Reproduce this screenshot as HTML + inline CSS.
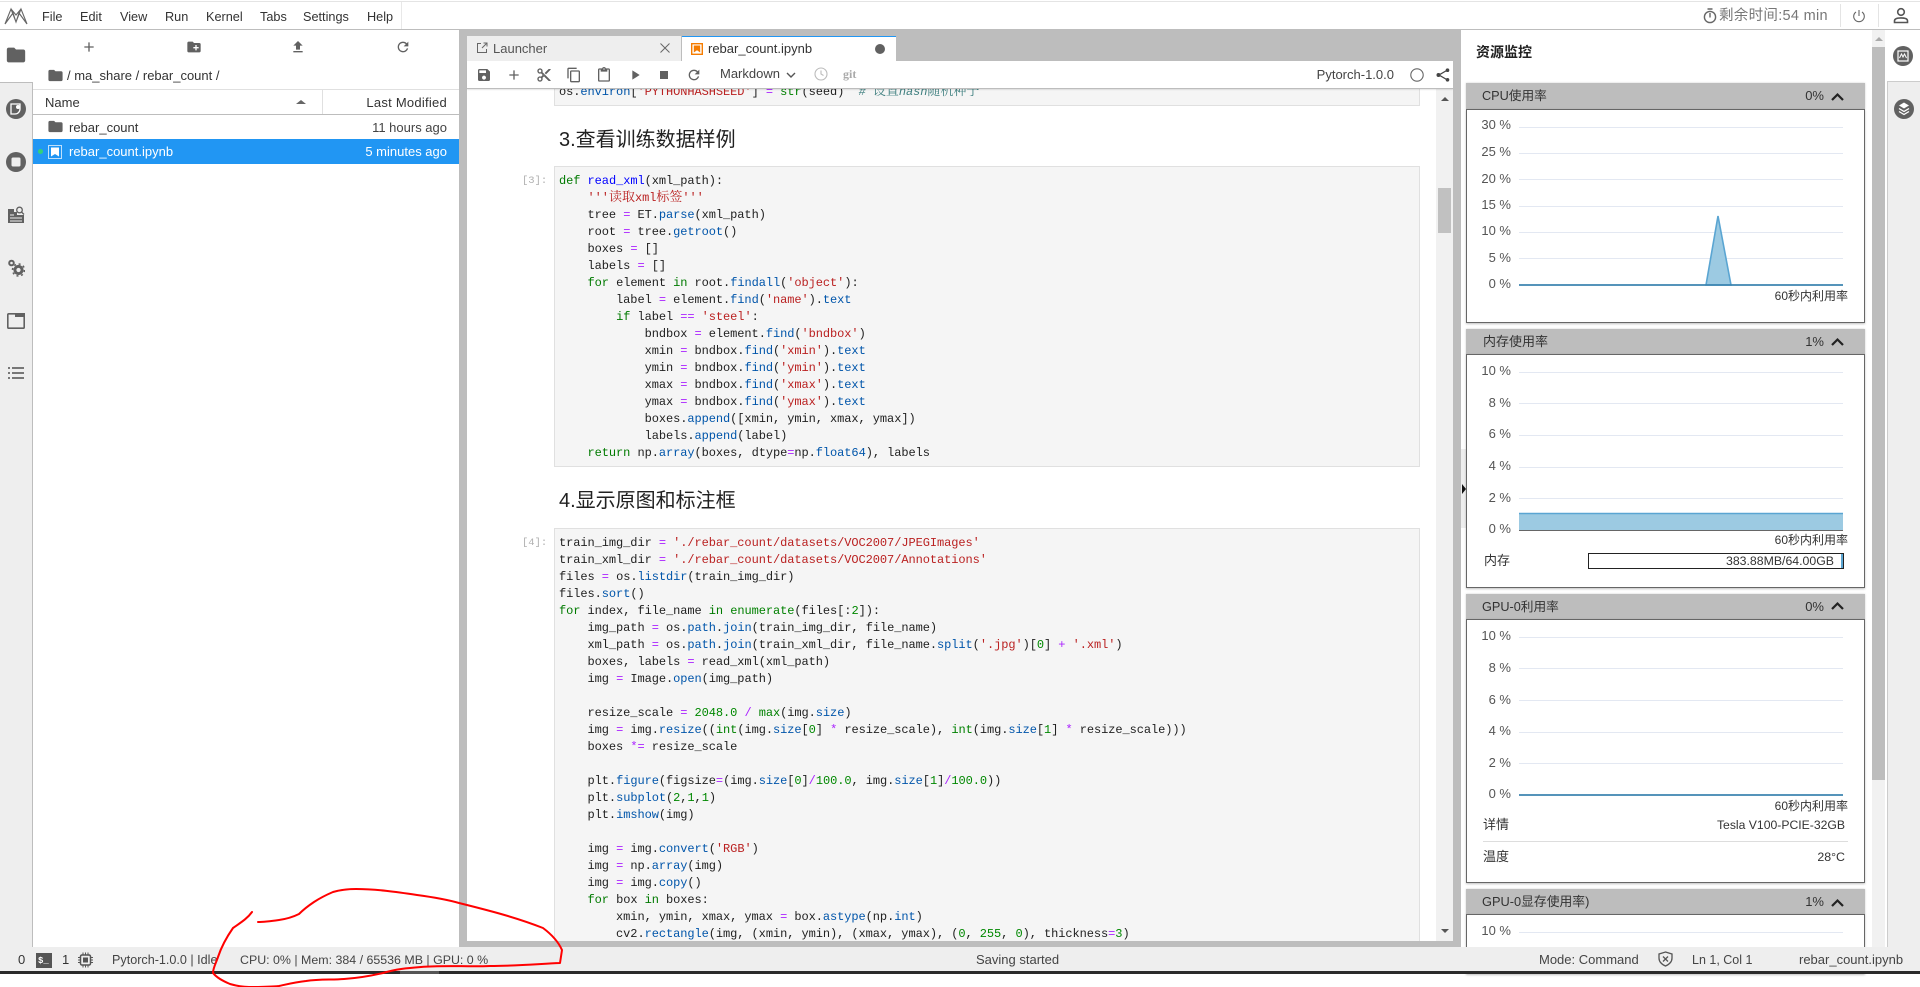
<!DOCTYPE html>
<html><head><meta charset="utf-8"><title>JupyterLab</title>
<style>
html,body{margin:0;padding:0;width:1920px;height:987px;overflow:hidden;background:#fff}
body{position:relative;font-family:"Liberation Sans","Noto Sans CJK SC",sans-serif;font-size:13px;color:#333}
.a,.t,.r,svg.i{position:absolute}
.t,.r{white-space:nowrap;line-height:18px;height:18px}
svg.i{fill:#616161}
.code{position:absolute;left:559px;font:12px/17px "Liberation Mono","Noto Sans CJK SC",monospace;letter-spacing:-.07px;color:#212121;white-space:pre}
.code .c{font:13px/0 "Noto Serif CJK SC",serif;letter-spacing:0}
.k{color:#007a00}.d{color:#00f}.s{color:#ba2121}.o{color:#a2f}.n{color:#080}.b{color:#008000}.p{color:#05a}.m{color:#408080;font-style:italic}
.cell{position:absolute;left:554px;width:866px;background:#f5f5f5;border:1px solid #e0e0e0;box-sizing:border-box}
.pr{position:absolute;left:522px;font:10.500px/17px "Liberation Mono",monospace;color:#b0b0b0}
.h{position:absolute;left:559px;font-size:20px;line-height:28px;color:#212121;white-space:nowrap}
.ch{position:absolute;left:1466px;width:399px;height:26px;background:#bdbdbd;box-shadow:0 0 2px rgba(0,0,0,.2)}
.cb{position:absolute;left:1466px;width:399px;background:#fff;border:1px solid #666;box-sizing:border-box;box-shadow:0 1px 2px rgba(0,0,0,.25)}
.yl{position:absolute;right:409px;color:#555;font-size:13px;line-height:16px;white-space:nowrap}
.xl{position:absolute;right:72px;color:#333;font-size:12px;line-height:16px;white-space:nowrap}
.mn{font-size:12.700px}
</style></head><body>

<!-- top bar -->
<div class="a" style="left:0;top:1px;width:1920px;height:1px;background:#e4e4e4"></div>
<div class="a" style="left:0;top:29px;width:1920px;height:1px;background:#bdbdbd"></div>
<div class="a" style="left:401px;top:2px;width:1px;height:27px;background:#e8e8e8"></div>
<svg class="a" style="left:4px;top:7px" width="24" height="18" viewBox="0 0 24 18" fill="none" stroke="#666" stroke-width="1.100"><path d="M1 17L7 2l5 13 5-13 6 15M1 17L9 6l3 9 3-9 8 11M7 2l5 6 5-6"/></svg>
<div class="t mn" style="left:42px;top:8px">File</div>
<div class="t mn" style="left:80px;top:8px">Edit</div>
<div class="t mn" style="left:120px;top:8px">View</div>
<div class="t mn" style="left:165px;top:8px">Run</div>
<div class="t mn" style="left:206px;top:8px">Kernel</div>
<div class="t mn" style="left:260px;top:8px">Tabs</div>
<div class="t mn" style="left:303px;top:8px">Settings</div>
<div class="t mn" style="left:367px;top:8px">Help</div>
<svg class="a" style="left:1703px;top:8px" width="14" height="16" viewBox="0 0 14 16" fill="none" stroke="#666" stroke-width="1.400"><circle cx="7" cy="9" r="5.600"/><path d="M4.500 1h5M7 5v4.500"/></svg>
<div class="t" style="left:1719px;top:7px;font-size:14.500px;color:#777;letter-spacing:.3px">剩余时间:54 min</div>
<div class="a" style="left:1840px;top:4px;width:1px;height:23px;background:#e4e4e4"></div>
<div class="a" style="left:1878px;top:4px;width:1px;height:23px;background:#e4e4e4"></div>
<svg class="a" style="left:1852px;top:9px" width="14" height="14" viewBox="0 0 14 14" fill="none" stroke="#666" stroke-width="1.100"><path d="M7 1v6M4 3a5.300 5.300 0 1 0 6 0"/></svg>
<svg class="a" style="left:1893px;top:7px" width="16" height="17" viewBox="0 0 16 17" fill="none" stroke="#555" stroke-width="1.600"><circle cx="8" cy="5" r="3.300"/><path d="M1.500 15.500v-1.600c0-2 2.500-3 6.500-3s6.500 1 6.500 3v1.600z"/></svg>

<!-- left sidebar -->
<div class="a" style="left:0;top:82px;width:33px;height:865px;background:#eee;border-top:1px solid #bdbdbd;border-right:1px solid #bdbdbd;box-sizing:border-box"></div>
<svg class="i" style="left:5px;top:44px" width="22" height="22" viewBox="0 0 24 24"><path d="M10 4H4c-1.100 0-2 .9-2 2v12c0 1.100.9 2 2 2h16c1.100 0 2-.9 2-2V8c0-1.100-.9-2-2-2h-8l-2-2z"/></svg>
<svg class="a" style="left:5px;top:98px" width="22" height="22" viewBox="0 0 22 22"><circle cx="11" cy="11" r="10" fill="#616161"/><path d="M6 6h9v5a5 5 0 0 1-5 5H6z" fill="none" stroke="#fff" stroke-width="1.300"/><circle cx="13" cy="9" r="2" fill="#fff"/></svg>
<svg class="a" style="left:6px;top:152px" width="20" height="20" viewBox="0 0 20 20"><circle cx="10" cy="10" r="10" fill="#616161"/><rect x="5.500" y="5.500" width="9" height="9" rx="1.500" fill="#eee"/></svg>
<svg class="a" style="left:7px;top:206px" width="18" height="18" viewBox="0 0 18 18"><path d="M1 3h6v3h3v3h7v8H1z" fill="#616161"/><circle cx="12.500" cy="4" r="2.800" fill="none" stroke="#616161" stroke-width="1.300"/><path d="M14.500 6l2.500 2.500" stroke="#616161" stroke-width="1.300"/><path d="M3 9h4M3 12h12M3 15h12" stroke="#eee"/></svg>
<svg class="a" style="left:7px;top:259px" width="18" height="18" viewBox="0 0 18 18"><circle cx="4.500" cy="4" r="2.300" fill="none" stroke="#616161" stroke-width="2"/><circle cx="11.500" cy="11" r="3.600" fill="none" stroke="#616161" stroke-width="3"/><circle cx="11.500" cy="11" r="6" fill="none" stroke="#616161" stroke-width="1.600" stroke-dasharray="2 2.700"/></svg>
<svg class="a" style="left:7px;top:313px" width="18" height="16" viewBox="0 0 18 16"><rect x=".8" y=".8" width="16.400" height="14.400" rx="1" fill="none" stroke="#616161" stroke-width="1.600"/><rect x="8" y="0" width="10" height="4" fill="#616161"/></svg>
<svg class="a" style="left:8px;top:367px" width="16" height="12" viewBox="0 0 16 12" fill="#777"><rect x="0" y="0" width="2" height="2"/><rect x="4" y="0" width="12" height="2"/><rect x="0" y="5" width="2" height="2"/><rect x="4" y="5" width="12" height="2"/><rect x="0" y="10" width="2" height="2"/><rect x="4" y="10" width="12" height="2"/></svg>

<!-- file browser -->
<svg class="i" style="left:81px;top:39px" width="16" height="16" viewBox="0 0 24 24"><path d="M19 13h-6v6h-2v-6H5v-2h6V5h2v6h6v2z"/></svg>
<svg class="i" style="left:186px;top:39px" width="16" height="16" viewBox="0 0 24 24"><path d="M20 6h-8l-2-2H4c-1.110 0-1.990.89-1.990 2L2 18c0 1.110.89 2 2 2h16c1.110 0 2-.89 2-2V8c0-1.110-.89-2-2-2zm-1 8h-3v3h-2v-3h-3v-2h3V9h2v3h3v2z"/></svg>
<svg class="i" style="left:290px;top:39px" width="16" height="16" viewBox="0 0 24 24"><path d="M9 16h6v-6h4l-7-7-7 7h4zm-4 2h14v2H5z"/></svg>
<svg class="i" style="left:395px;top:39px" width="16" height="16" viewBox="0 0 24 24"><path d="M17.650 6.350C16.200 4.900 14.210 4 12 4c-4.420 0-7.990 3.580-7.990 8s3.570 8 7.990 8c3.730 0 6.840-2.550 7.730-6h-2.080c-.82 2.330-3.040 4-5.650 4-3.310 0-6-2.690-6-6s2.690-6 6-6c1.660 0 3.140.69 4.220 1.780L13 11h7V4l-2.350 2.350z"/></svg>
<svg class="i" style="left:47px;top:67px" width="17" height="17" viewBox="0 0 24 24"><path d="M10 4H4c-1.100 0-2 .9-2 2v12c0 1.100.9 2 2 2h16c1.100 0 2-.9 2-2V8c0-1.100-.9-2-2-2h-8l-2-2z"/></svg>
<div class="t" style="left:67px;top:67px">/ ma_share / rebar_count /</div>
<div class="a" style="left:33px;top:89px;width:426px;height:1px;background:#e0e0e0"></div>
<div class="a" style="left:33px;top:114px;width:426px;height:1px;background:#bdbdbd"></div>
<div class="a" style="left:322px;top:90px;width:1px;height:24px;background:#e0e0e0"></div>
<div class="t" style="left:45px;top:94px">Name</div>
<div class="a" style="left:296px;top:100px;border:5px solid transparent;border-top:0;border-bottom:4px solid #666"></div>
<div class="r" style="right:1473px;top:94px;letter-spacing:.25px">Last Modified</div>
<svg class="i" style="left:47px;top:118px" width="17" height="17" viewBox="0 0 24 24"><path d="M10 4H4c-1.100 0-2 .9-2 2v12c0 1.100.9 2 2 2h16c1.100 0 2-.9 2-2V8c0-1.100-.9-2-2-2h-8l-2-2z"/></svg>
<div class="t" style="left:69px;top:119px">rebar_count</div>
<div class="r" style="right:1473px;top:119px;color:#444">11 hours ago</div>
<div class="a" style="left:33px;top:139px;width:426px;height:25px;background:#2196f3"></div>
<div class="a" style="left:38px;top:149px;width:5px;height:5px;border-radius:50%;background:#33d17a"></div>
<svg class="a" style="left:48px;top:145px" width="14" height="14" viewBox="0 0 14 14"><rect x=".5" y=".5" width="13" height="13" fill="none" stroke="#bfe0fb"/><path d="M3 2.500h8v9L7 9l-4 2.500z" fill="#fff"/></svg>
<div class="t" style="left:69px;top:143px;color:#fff">rebar_count.ipynb</div>
<div class="r" style="right:1473px;top:143px;color:#fff">5 minutes ago</div>

<!-- gray dock -->
<div class="a" style="left:459px;top:30px;width:1002px;height:917px;background:#bdbdbd"></div>

<!-- tabs -->
<div class="a" style="left:467px;top:36px;width:214px;height:25px;background:#eee"></div>
<svg class="a" style="left:476px;top:42px" width="12" height="12" viewBox="0 0 12 12" fill="none" stroke="#666"><path d="M5 1.500H1.500v9h9V7M6 6l5-5M7.500 1H11v3.500"/></svg>
<div class="t" style="left:493px;top:40px;color:#555">Launcher</div>
<svg class="a" style="left:660px;top:43px" width="10" height="10" viewBox="0 0 10 10" stroke="#666" stroke-width="1"><path d="M.5.500l9 9M9.500.500l-9 9"/></svg>
<div class="a" style="left:682px;top:36px;width:214px;height:25px;background:#fff;border-top:1px solid #2196f3;box-sizing:border-box"></div>
<svg class="a" style="left:691px;top:43px" width="12" height="12" viewBox="0 0 12 12"><rect x=".7" y=".7" width="10.600" height="10.600" fill="#fff" stroke="#f57c00" stroke-width="1.400"/><path d="M2.800 2.500h6.400v7L6 7.300 2.800 9.500z" fill="#f57c00"/></svg>
<div class="t" style="left:708px;top:40px">rebar_count.ipynb</div>
<div class="a" style="left:875px;top:44px;width:10px;height:10px;border-radius:50%;background:#616161"></div>

<!-- notebook -->
<div class="a" style="left:467px;top:61px;width:986px;height:880px;background:#fff;overflow:hidden"></div>

<div class="a" style="left:467px;top:61px;width:986px;height:880px;overflow:hidden">
<div style="position:absolute;left:-467px;top:-61px;width:1920px;height:987px">
<div class="cell" style="top:60px;height:46px"></div>
<div class="code" style="top:84px">os.<span class="p">environ</span>[<span class="s">'PYTHONHASHSEED'</span>] <span class="o">=</span> <span class="b">str</span>(seed)  <span class="m"># <span class="c">设置</span>hash<span class="c">随机种子</span></span></div>
<div class="h" style="top:126px">3.查看训练数据样例</div>
<div class="pr" style="top:173px">[3]:</div>
<div class="cell" style="top:166px;height:301px"></div>
<div class="code" style="top:173px"><span class="k">def</span> <span class="d">read_xml</span>(xml_path):
    <span class="s">'''<span class="c">读取</span>xml<span class="c">标签</span>'''</span>
    tree <span class="o">=</span> ET.<span class="p">parse</span>(xml_path)
    root <span class="o">=</span> tree.<span class="p">getroot</span>()
    boxes <span class="o">=</span> []
    labels <span class="o">=</span> []
    <span class="k">for</span> element <span class="k">in</span> root.<span class="p">findall</span>(<span class="s">'object'</span>):
        label <span class="o">=</span> element.<span class="p">find</span>(<span class="s">'name'</span>).<span class="p">text</span>
        <span class="k">if</span> label <span class="o">==</span> <span class="s">'steel'</span>:
            bndbox <span class="o">=</span> element.<span class="p">find</span>(<span class="s">'bndbox'</span>)
            xmin <span class="o">=</span> bndbox.<span class="p">find</span>(<span class="s">'xmin'</span>).<span class="p">text</span>
            ymin <span class="o">=</span> bndbox.<span class="p">find</span>(<span class="s">'ymin'</span>).<span class="p">text</span>
            xmax <span class="o">=</span> bndbox.<span class="p">find</span>(<span class="s">'xmax'</span>).<span class="p">text</span>
            ymax <span class="o">=</span> bndbox.<span class="p">find</span>(<span class="s">'ymax'</span>).<span class="p">text</span>
            boxes.<span class="p">append</span>([xmin, ymin, xmax, ymax])
            labels.<span class="p">append</span>(label)
    <span class="k">return</span> np.<span class="p">array</span>(boxes, dtype<span class="o">=</span>np.<span class="p">float64</span>), labels</div>
<div class="h" style="top:487px">4.显示原图和标注框</div>
<div class="pr" style="top:535px">[4]:</div>
<div class="cell" style="top:528px;height:440px"></div>
<div class="code" style="top:535px">train_img_dir <span class="o">=</span> <span class="s">'./rebar_count/datasets/VOC2007/JPEGImages'</span>
train_xml_dir <span class="o">=</span> <span class="s">'./rebar_count/datasets/VOC2007/Annotations'</span>
files <span class="o">=</span> os.<span class="p">listdir</span>(train_img_dir)
files.<span class="p">sort</span>()
<span class="k">for</span> index, file_name <span class="k">in</span> <span class="b">enumerate</span>(files[:<span class="n">2</span>]):
    img_path <span class="o">=</span> os.<span class="p">path</span>.<span class="p">join</span>(train_img_dir, file_name)
    xml_path <span class="o">=</span> os.<span class="p">path</span>.<span class="p">join</span>(train_xml_dir, file_name.<span class="p">split</span>(<span class="s">'.jpg'</span>)[<span class="n">0</span>] <span class="o">+</span> <span class="s">'.xml'</span>)
    boxes, labels <span class="o">=</span> read_xml(xml_path)
    img <span class="o">=</span> Image.<span class="p">open</span>(img_path)

    resize_scale <span class="o">=</span> <span class="n">2048.0</span> <span class="o">/</span> <span class="b">max</span>(img.<span class="p">size</span>)
    img <span class="o">=</span> img.<span class="p">resize</span>((<span class="b">int</span>(img.<span class="p">size</span>[<span class="n">0</span>] <span class="o">*</span> resize_scale), <span class="b">int</span>(img.<span class="p">size</span>[<span class="n">1</span>] <span class="o">*</span> resize_scale)))
    boxes <span class="o">*=</span> resize_scale

    plt.<span class="p">figure</span>(figsize<span class="o">=</span>(img.<span class="p">size</span>[<span class="n">0</span>]<span class="o">/</span><span class="n">100.0</span>, img.<span class="p">size</span>[<span class="n">1</span>]<span class="o">/</span><span class="n">100.0</span>))
    plt.<span class="p">subplot</span>(<span class="n">2</span>,<span class="n">1</span>,<span class="n">1</span>)
    plt.<span class="p">imshow</span>(img)

    img <span class="o">=</span> img.<span class="p">convert</span>(<span class="s">'RGB'</span>)
    img <span class="o">=</span> np.<span class="p">array</span>(img)
    img <span class="o">=</span> img.<span class="p">copy</span>()
    <span class="k">for</span> box <span class="k">in</span> boxes:
        xmin, ymin, xmax, ymax <span class="o">=</span> box.<span class="p">astype</span>(np.<span class="p">int</span>)
        cv2.<span class="p">rectangle</span>(img, (xmin, ymin), (xmax, ymax), (<span class="n">0</span>, <span class="n">255</span>, <span class="n">0</span>), thickness<span class="o">=</span><span class="n">3</span>)</div>
</div></div>

<!-- notebook scrollbar -->
<div class="a" style="left:1436px;top:89px;width:17px;height:852px;background:#f1f1f1"></div>
<div class="a" style="left:1438px;top:188px;width:13px;height:45px;background:#c1c1c1"></div>
<div class="a" style="left:1441px;top:97px;border:4px solid transparent;border-top:0;border-bottom:4px solid #555"></div>
<div class="a" style="left:1441px;top:929px;border:4px solid transparent;border-bottom:0;border-top:4px solid #555"></div>

<!-- notebook toolbar -->
<div class="a" style="left:467px;top:61px;width:986px;height:28px;background:#fff;border-bottom:1px solid #bdbdbd;box-sizing:border-box;box-shadow:0 1px 1px rgba(0,0,0,.1)"></div>
<svg class="i" style="left:476px;top:67px" width="16" height="16" viewBox="0 0 24 24"><path d="M17 3H5c-1.110 0-2 .9-2 2v14c0 1.100.89 2 2 2h14c1.100 0 2-.9 2-2V7l-4-4zm-5 16c-1.660 0-3-1.340-3-3s1.340-3 3-3 3 1.340 3 3-1.340 3-3 3zm3-10H5V5h10v4z"/></svg>
<svg class="i" style="left:506px;top:67px" width="16" height="16" viewBox="0 0 24 24"><path d="M19 13h-6v6h-2v-6H5v-2h6V5h2v6h6v2z"/></svg>
<svg class="i" style="left:536px;top:67px" width="16" height="16" viewBox="0 0 24 24"><path d="M9.640 7.640c.23-.5.36-1.050.36-1.640 0-2.210-1.790-4-4-4S2 3.790 2 6s1.790 4 4 4c.59 0 1.140-.13 1.640-.36L10 12l-2.360 2.360C7.140 14.130 6.590 14 6 14c-2.210 0-4 1.790-4 4s1.790 4 4 4 4-1.790 4-4c0-.59-.13-1.140-.36-1.640L12 14l7 7h3v-1L9.640 7.640zM6 8c-1.100 0-2-.89-2-2s.9-2 2-2 2 .89 2 2-.9 2-2 2zm0 12c-1.100 0-2-.89-2-2s.9-2 2-2 2 .89 2 2-.9 2-2 2zm6-7.500c-.28 0-.5-.22-.5-.5s.22-.5.5-.5.5.22.5.5-.22.5-.5.5zM19 3l-6 6 2 2 7-7V3z"/></svg>
<svg class="i" style="left:566px;top:67px" width="16" height="16" viewBox="0 0 24 24"><path d="M16 1H4c-1.100 0-2 .9-2 2v14h2V3h12V1zm3 4H8c-1.100 0-2 .9-2 2v14c0 1.100.9 2 2 2h11c1.100 0 2-.9 2-2V7c0-1.100-.9-2-2-2zm0 16H8V7h11v14z"/></svg>
<svg class="i" style="left:596px;top:67px" width="16" height="16" viewBox="0 0 24 24"><path d="M19 2h-4.180C14.400.84 13.300 0 12 0c-1.300 0-2.400.84-2.820 2H5c-1.100 0-2 .9-2 2v16c0 1.100.9 2 2 2h14c1.100 0 2-.9 2-2V4c0-1.100-.9-2-2-2zm-7 0c.55 0 1 .45 1 1s-.45 1-1 1-1-.45-1-1 .45-1 1-1zm7 18H5V4h2v3h10V4h2v16z"/></svg>
<svg class="i" style="left:627px;top:67px" width="16" height="16" viewBox="0 0 24 24"><path d="M8 5v14l11-7z"/></svg>
<svg class="i" style="left:656px;top:67px" width="16" height="16" viewBox="0 0 24 24"><path d="M6 6h12v12H6z"/></svg>
<svg class="i" style="left:686px;top:67px" width="16" height="16" viewBox="0 0 24 24"><path d="M17.650 6.350C16.200 4.900 14.210 4 12 4c-4.420 0-7.990 3.580-7.990 8s3.570 8 7.990 8c3.730 0 6.840-2.550 7.730-6h-2.080c-.82 2.330-3.040 4-5.650 4-3.310 0-6-2.690-6-6s2.690-6 6-6c1.660 0 3.140.69 4.220 1.780L13 11h7V4l-2.350 2.350z"/></svg>
<div class="t" style="left:720px;top:65px;color:#444">Markdown</div>
<svg class="a" style="left:786px;top:72px" width="10" height="7" viewBox="0 0 10 7" fill="none" stroke="#555" stroke-width="1.400"><path d="M1 1l4 4 4-4"/></svg>
<svg class="a" style="left:814px;top:67px" width="14" height="14" viewBox="0 0 14 14" fill="none" stroke="#bbb" stroke-width="1.100"><circle cx="7" cy="7" r="6"/><path d="M7 3.500V7l2.500 1.500"/></svg>
<div class="t" style="left:843px;top:65px;color:#aaa;font:bold 12px/18px 'Liberation Serif',serif">git</div>
<div class="r" style="right:526px;top:66px;color:#444">Pytorch-1.0.0</div>
<svg class="a" style="left:1410px;top:68px" width="14" height="14" viewBox="0 0 14 14" fill="none" stroke="#666" stroke-width="1.100"><circle cx="7" cy="7" r="6.200"/></svg>
<svg class="a" style="left:1436px;top:68px" width="14" height="14" viewBox="0 0 14 14"><path d="M11.500 2L3 7l8.500 5" fill="none" stroke="#444" stroke-width="1.300"/><circle cx="11.500" cy="2.200" r="1.800" fill="#444"/><circle cx="2.500" cy="7" r="2" fill="#444"/><circle cx="11.500" cy="11.800" r="1.800" fill="#444"/></svg>

<!-- right panel -->
<div class="a" style="left:1453px;top:30px;width:8px;height:917px;background:#bdbdbd"></div>
<div class="a" style="left:1461px;top:449px;width:5px;height:79px;background:#eee"></div>
<div class="a" style="left:1462px;top:484px;border:5px solid transparent;border-right:0;border-left:4px solid #111"></div>
<div class="t" style="left:1476px;top:43px;font-weight:bold;font-size:14px;color:#222">资源监控</div>
<div class="a" style="left:1872px;top:30px;width:13px;height:917px;background:#f1f1f1"></div>
<div class="a" style="left:1872px;top:47px;width:13px;height:733px;background:#bdbdbd"></div>
<div class="a" style="left:1875px;top:37px;border:4px solid transparent;border-top:0;border-bottom:4px solid #aaa"></div>
<div class="a" style="left:1887px;top:30px;width:33px;height:917px;background:#eee;border-left:1px solid #ccc;box-sizing:border-box"></div>
<div class="a" style="left:1887px;top:30px;width:33px;height:52px;background:#fff;border-bottom:1px solid #ccc;box-sizing:border-box"></div>
<svg class="a" style="left:1893px;top:46px" width="20" height="20" viewBox="0 0 20 20"><circle cx="10" cy="10" r="10" fill="#616161"/><rect x="5" y="5" width="10" height="10" fill="none" stroke="#fff" stroke-width="1.200"/><path d="M6.500 12l2-4 1.500 3 1.500-3 2 4" fill="none" stroke="#fff"/></svg>
<svg class="a" style="left:1894px;top:99px" width="20" height="20" viewBox="0 0 20 20"><circle cx="10" cy="10" r="10" fill="#616161"/><path d="M10 3.500l5 3-5 3-5-3z" fill="#fff"/><path d="M5 9.500l5 3 5-3M5 12.500l5 3 5-3" fill="none" stroke="#fff" stroke-width="1.300"/></svg>

<!-- cards -->
<div class="ch" style="top:83px"></div><div class="cb" style="top:109px;height:214px"></div>
<div class="ch" style="top:329px"></div><div class="cb" style="top:354px;height:234px"></div>
<div class="ch" style="top:594px"></div><div class="cb" style="top:619px;height:264px"></div>
<div class="ch" style="top:889px"></div><div class="cb" style="top:914px;height:60px"></div>

<div class="t" style="left:1482px;top:87px;font-size:12.700px">CPU使用率</div><div class="r" style="right:96px;top:87px">0%</div>
<div class="t" style="left:1483px;top:333px">内存使用率</div><div class="r" style="right:96px;top:333px">1%</div>
<div class="t" style="left:1482px;top:598px;font-size:12.700px">GPU-0利用率</div><div class="r" style="right:96px;top:598px">0%</div>
<div class="t" style="left:1482px;top:893px;font-size:12.800px">GPU-0显存使用率)</div><div class="r" style="right:96px;top:893px">1%</div>

<svg class="a" style="left:0;top:0;pointer-events:none" width="1920" height="987" viewBox="0 0 1920 987">
<g fill="none" stroke="#222" stroke-width="2.200"><path d="M1832 100l5.500-5.500 5.500 5.500M1832 345l5.500-5.500 5.500 5.500M1832 609l5.500-5.500 5.500 5.500M1832 906l5.500-5.500 5.500 5.500"/></g>
<g stroke="#e3e8f2" stroke-width="1"><path d="M1519 127.500h324M1519 153.500h324M1519 179.500h324M1519 206.500h324M1519 232.500h324M1519 258.500h324"/>
<path d="M1519 372.500h324M1519 403.500h324M1519 435.500h324M1519 467.500h324M1519 498.500h324"/>
<path d="M1519 637.500h324M1519 668.500h324M1519 700.500h324M1519 732.500h324M1519 763.500h324"/>
<path d="M1519 932.500h324"/></g>
<path d="M1706 285L1718 216 1731 285z" fill="#9ccae2" stroke="#5aa5d2" stroke-width="1.600"/>
<path d="M1519 285h324" stroke="#3d85b0" stroke-width="1.800"/>
<rect x="1519" y="513" width="324" height="17" fill="#9ccae2"/>
<path d="M1519 513.500h324" stroke="#5aa5d2" stroke-width="1.500"/>
<path d="M1519 530.500h324" stroke="#666" stroke-width="1"/>
<path d="M1519 795h324" stroke="#3d85b0" stroke-width="1.800"/>
</svg>

<div class="yl" style="top:117px">30 %</div><div class="yl" style="top:144px">25 %</div><div class="yl" style="top:171px">20 %</div><div class="yl" style="top:197px">15 %</div><div class="yl" style="top:223px">10 %</div><div class="yl" style="top:250px">5 %</div><div class="yl" style="top:276px">0 %</div>
<div class="xl" style="top:288px">60秒内利用率</div>
<div class="yl" style="top:363px">10 %</div><div class="yl" style="top:395px">8 %</div><div class="yl" style="top:426px">6 %</div><div class="yl" style="top:458px">4 %</div><div class="yl" style="top:490px">2 %</div><div class="yl" style="top:521px">0 %</div>
<div class="xl" style="top:532px">60秒内利用率</div>
<div class="t" style="left:1484px;top:552px">内存</div>
<div class="a" style="left:1588px;top:553px;width:256px;height:16px;border:1px solid #222;box-sizing:border-box;background:#fff"><div class="a" style="right:0;top:0;width:2px;height:14px;background:#5aa5d2"></div></div>
<div class="r" style="right:86px;top:552px;font-size:12.300px">383.88MB/64.00GB</div>
<div class="yl" style="top:628px">10 %</div><div class="yl" style="top:660px">8 %</div><div class="yl" style="top:692px">6 %</div><div class="yl" style="top:723px">4 %</div><div class="yl" style="top:755px">2 %</div><div class="yl" style="top:786px">0 %</div>
<div class="xl" style="top:798px">60秒内利用率</div>
<div class="t" style="left:1483px;top:816px">详情</div><div class="r" style="right:75px;top:816px;font-size:12.200px">Tesla V100-PCIE-32GB</div>
<div class="a" style="left:1483px;top:841px;width:365px;height:1px;background:#ddd"></div>
<div class="t" style="left:1483px;top:848px">温度</div><div class="r" style="right:75px;top:848px;font-size:12.400px">28°C</div>
<div class="yl" style="top:923px">10 %</div>

<!-- status bar -->
<div class="a" style="left:0;top:947px;width:1920px;height:24px;background:#eee"></div>
<div class="a" style="left:0;top:971px;width:1920px;height:3px;background:#2b2b2b"></div>
<div class="a" style="left:400px;top:971px;width:39px;height:3px;background:#555"></div>
<div class="t" style="left:18px;top:951px">0</div>
<div class="a" style="left:36px;top:953px;width:16px;height:15px;background:#555;color:#fff;font:bold 9px/16px 'Liberation Mono',monospace;text-indent:2px">$_</div>
<div class="t" style="left:62px;top:951px">1</div>
<svg class="a" style="left:78px;top:952px" width="15" height="16" viewBox="0 0 15 16" fill="none" stroke="#555"><rect x="2.500" y="3" width="10" height="10" rx="1.500" stroke-width="1.500"/><rect x="5.500" y="6" width="4" height="4" fill="#555"/><path d="M5 .5v2M7.500.5v2M10 .5v2M5 13.500v2M7.500 13.500v2M10 13.500v2M0 5.500h2M0 8h2M0 10.500h2M13 5.500h2M13 8h2M13 10.500h2"/></svg>
<div class="t" style="left:112px;top:951px;color:#444;font-size:12.600px">Pytorch-1.0.0 | Idle</div>
<div class="t" style="left:240px;top:951px;color:#444;font-size:12.400px">CPU: 0% | Mem: 384 / 65536 MB | GPU: 0 %</div>
<div class="t" style="left:976px;top:951px;color:#444">Saving started</div>
<div class="t" style="left:1539px;top:951px;color:#444">Mode: Command</div>
<svg class="a" style="left:1658px;top:951px" width="15" height="16" viewBox="0 0 15 16" fill="none" stroke="#555" stroke-width="1.300"><path d="M7.500 1L14 3v4c0 4-3 6.500-6.500 8C4 13.500 1 11 1 7V3z"/><path d="M5 5.500l5 5M10 5.500l-5 5"/></svg>
<div class="t" style="left:1692px;top:951px;color:#444;font-size:12.500px">Ln 1, Col 1</div>
<div class="t" style="left:1799px;top:951px;color:#444">rebar_count.ipynb</div>

<!-- red annotation -->
<svg class="a" style="left:0;top:0;pointer-events:none" width="1920" height="987" viewBox="0 0 1920 987" fill="none" stroke="#f00" stroke-width="2" stroke-linecap="round" stroke-linejoin="round">
<path d="M252 912C247 919 240 923 233 928C226 938 221 948 218 957C216 963 213 968 213 973C217 978 223 981 230 984C237 986 243 987 249 987C260 987 270 987 279 986C288 984 296 982 306 981C320 979 332 980 344 979C358 978 370 976 383 973C396 969 408 968 421 967C445 965 468 967 490 966C515 966 538 964 560 963L562 950C558 941 551 934 543 928C515 917 487 910 459 903C445 899 432 897 417 895C397 892 376 889 356 889C347 889 340 890 333 892C326 895 320 898 314 902C308 906 303 910 299 914C293 917 286 919 279 920C272 921 265 922 258 922"/>
</svg>
</body></html>
